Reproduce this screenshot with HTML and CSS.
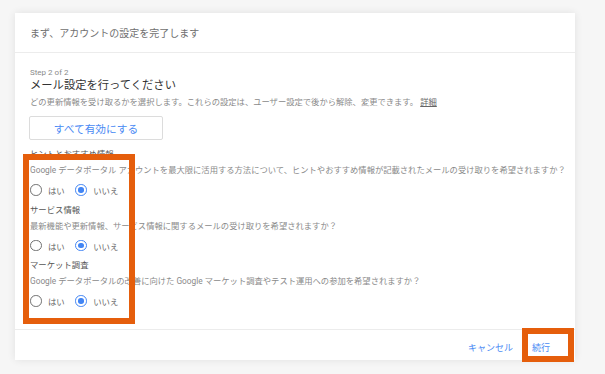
FILE: index.html
```html
<!DOCTYPE html>
<html lang="ja">
<head>
<meta charset="utf-8">
<title>アカウントの設定</title>
<link rel="stylesheet" href="styles.css">
</head>
<body>
<div class="card">
  <div class="card-header">まず、アカウントの設定を完了します</div>
  <div class="card-body">
    <div class="step">Step 2 of 2</div>
    <div class="title">メール設定を行ってください</div>
    <div class="desc">どの更新情報を受け取るかを選択します。これらの設定は、ユーザー設定で後から解除、変更できます。 <span class="link">詳細</span></div>
    <button class="enable-all">すべて有効にする</button>

    <div class="section first">
      <div class="label">ヒントとおすすめ情報</div>
      <div class="question">Google データポータル アカウントを最大限に活用する方法について、ヒントやおすすめ情報が記載されたメールの受け取りを希望されますか？</div>
      <div class="radios">
        <span class="radio"><span class="circle"></span><span class="rtext">はい</span></span>
        <span class="radio"><span class="circle on"></span><span class="rtext">いいえ</span></span>
      </div>
    </div>

    <div class="section">
      <div class="label">サービス情報</div>
      <div class="question">最新機能や更新情報、サービス情報に関するメールの受け取りを希望されますか？</div>
      <div class="radios">
        <span class="radio"><span class="circle"></span><span class="rtext">はい</span></span>
        <span class="radio"><span class="circle on"></span><span class="rtext">いいえ</span></span>
      </div>
    </div>

    <div class="section">
      <div class="label">マーケット調査</div>
      <div class="question">Google データポータルの改善に向けた Google マーケット調査やテスト運用への参加を希望されますか？</div>
      <div class="radios">
        <span class="radio"><span class="circle"></span><span class="rtext">はい</span></span>
        <span class="radio"><span class="circle on"></span><span class="rtext">いいえ</span></span>
      </div>
    </div>
  </div>
  <div class="card-footer">
    <button class="text-btn">キャンセル</button>
    <button class="text-btn">続行</button>
  </div>
</div>
<div class="highlight highlight-left"></div>
<div class="highlight highlight-right"></div>
</body>
</html>
```
FILE: styles.css
```css
html, body {
  margin: 0;
  padding: 0;
  background: #f6f6f6;
}
body {
  font-family: Roboto, "Noto Sans CJK JP", sans-serif;
  padding: 13px 0 0 15px;
  width: 605px;
  height: 374px;
  box-sizing: border-box;
  overflow: hidden;
}
.card {
  width: 560px;
  height: 347px;
  background: #fff;
  box-shadow: 0 0 8px rgba(0, 0, 0, 0.09);
  display: flex;
  flex-direction: column;
}
.card-header {
  height: 39px;
  padding-left: 15px;
  display: flex;
  align-items: center;
  border-bottom: 1px solid #ececec;
  font-size: 10px;
  color: #707070;
}
.card-body {
  flex: 1;
  padding: 15px 15px 0 15px;
}
.step {
  font-size: 8px;
  line-height: 10px;
  color: #8a8a8a;
}
.title {
  font-size: 11.3px;
  line-height: 16px;
  color: #333;
}
.desc {
  font-size: 8.3px;
  line-height: 16px;
  color: #8a8a8a;
  white-space: nowrap;
}
.link {
  color: #666;
  text-decoration: underline;
}
.enable-all {
  display: block;
  margin: 6px 0 0 -1px;
  width: 134px;
  height: 24px;
  box-sizing: border-box;
  border: 1px solid #dcdcdc;
  border-radius: 2px;
  background: #fff;
  color: #4a8af4;
  font-family: Roboto, "Noto Sans CJK JP", sans-serif;
  font-size: 10.7px;
  padding: 0;
}
.section {
  margin-top: 5.5px;
}
.section.first {
  margin-top: 7px;
}
.label {
  font-size: 8.4px;
  line-height: 14px;
  color: #555;
}
.question {
  margin-top: 2px;
  font-size: 8.3px;
  line-height: 14px;
  color: #8a8a8a;
  white-space: nowrap;
}
.radios {
  margin-top: 6px;
  height: 14px;
  display: flex;
  align-items: center;
  gap: 10.5px;
}
.radio {
  display: inline-flex;
  align-items: center;
  gap: 6.5px;
}
.circle {
  width: 11.5px;
  height: 11.5px;
  box-sizing: border-box;
  border: 1.5px solid #707070;
  border-radius: 50%;
  display: inline-flex;
  align-items: center;
  justify-content: center;
}
.circle.on {
  border-color: #4285f4;
}
.circle.on::after {
  content: "";
  width: 5.5px;
  height: 5.5px;
  border-radius: 50%;
  background: #4285f4;
}
.rtext {
  font-size: 8.4px;
  color: #666;
}
.card-footer {
  height: 31px;
  box-sizing: border-box;
  border-top: 1px solid #ececec;
  display: flex;
  justify-content: flex-end;
  align-items: center;
  gap: 19px;
  padding: 5px 25px 0 0;
}
.text-btn {
  border: none;
  background: none;
  padding: 0;
  font-family: Roboto, "Noto Sans CJK JP", sans-serif;
  font-size: 9px;
  color: #4a8af4;
}
.highlight {
  position: absolute;
  box-sizing: border-box;
  border: 6.5px solid #e55e0c;
}
.highlight-left {
  left: 22.5px;
  top: 154px;
  width: 112.5px;
  height: 170px;
}
.highlight-right {
  left: 521.5px;
  top: 328px;
  width: 52.5px;
  height: 34px;
  border-width: 6px;
}
```
